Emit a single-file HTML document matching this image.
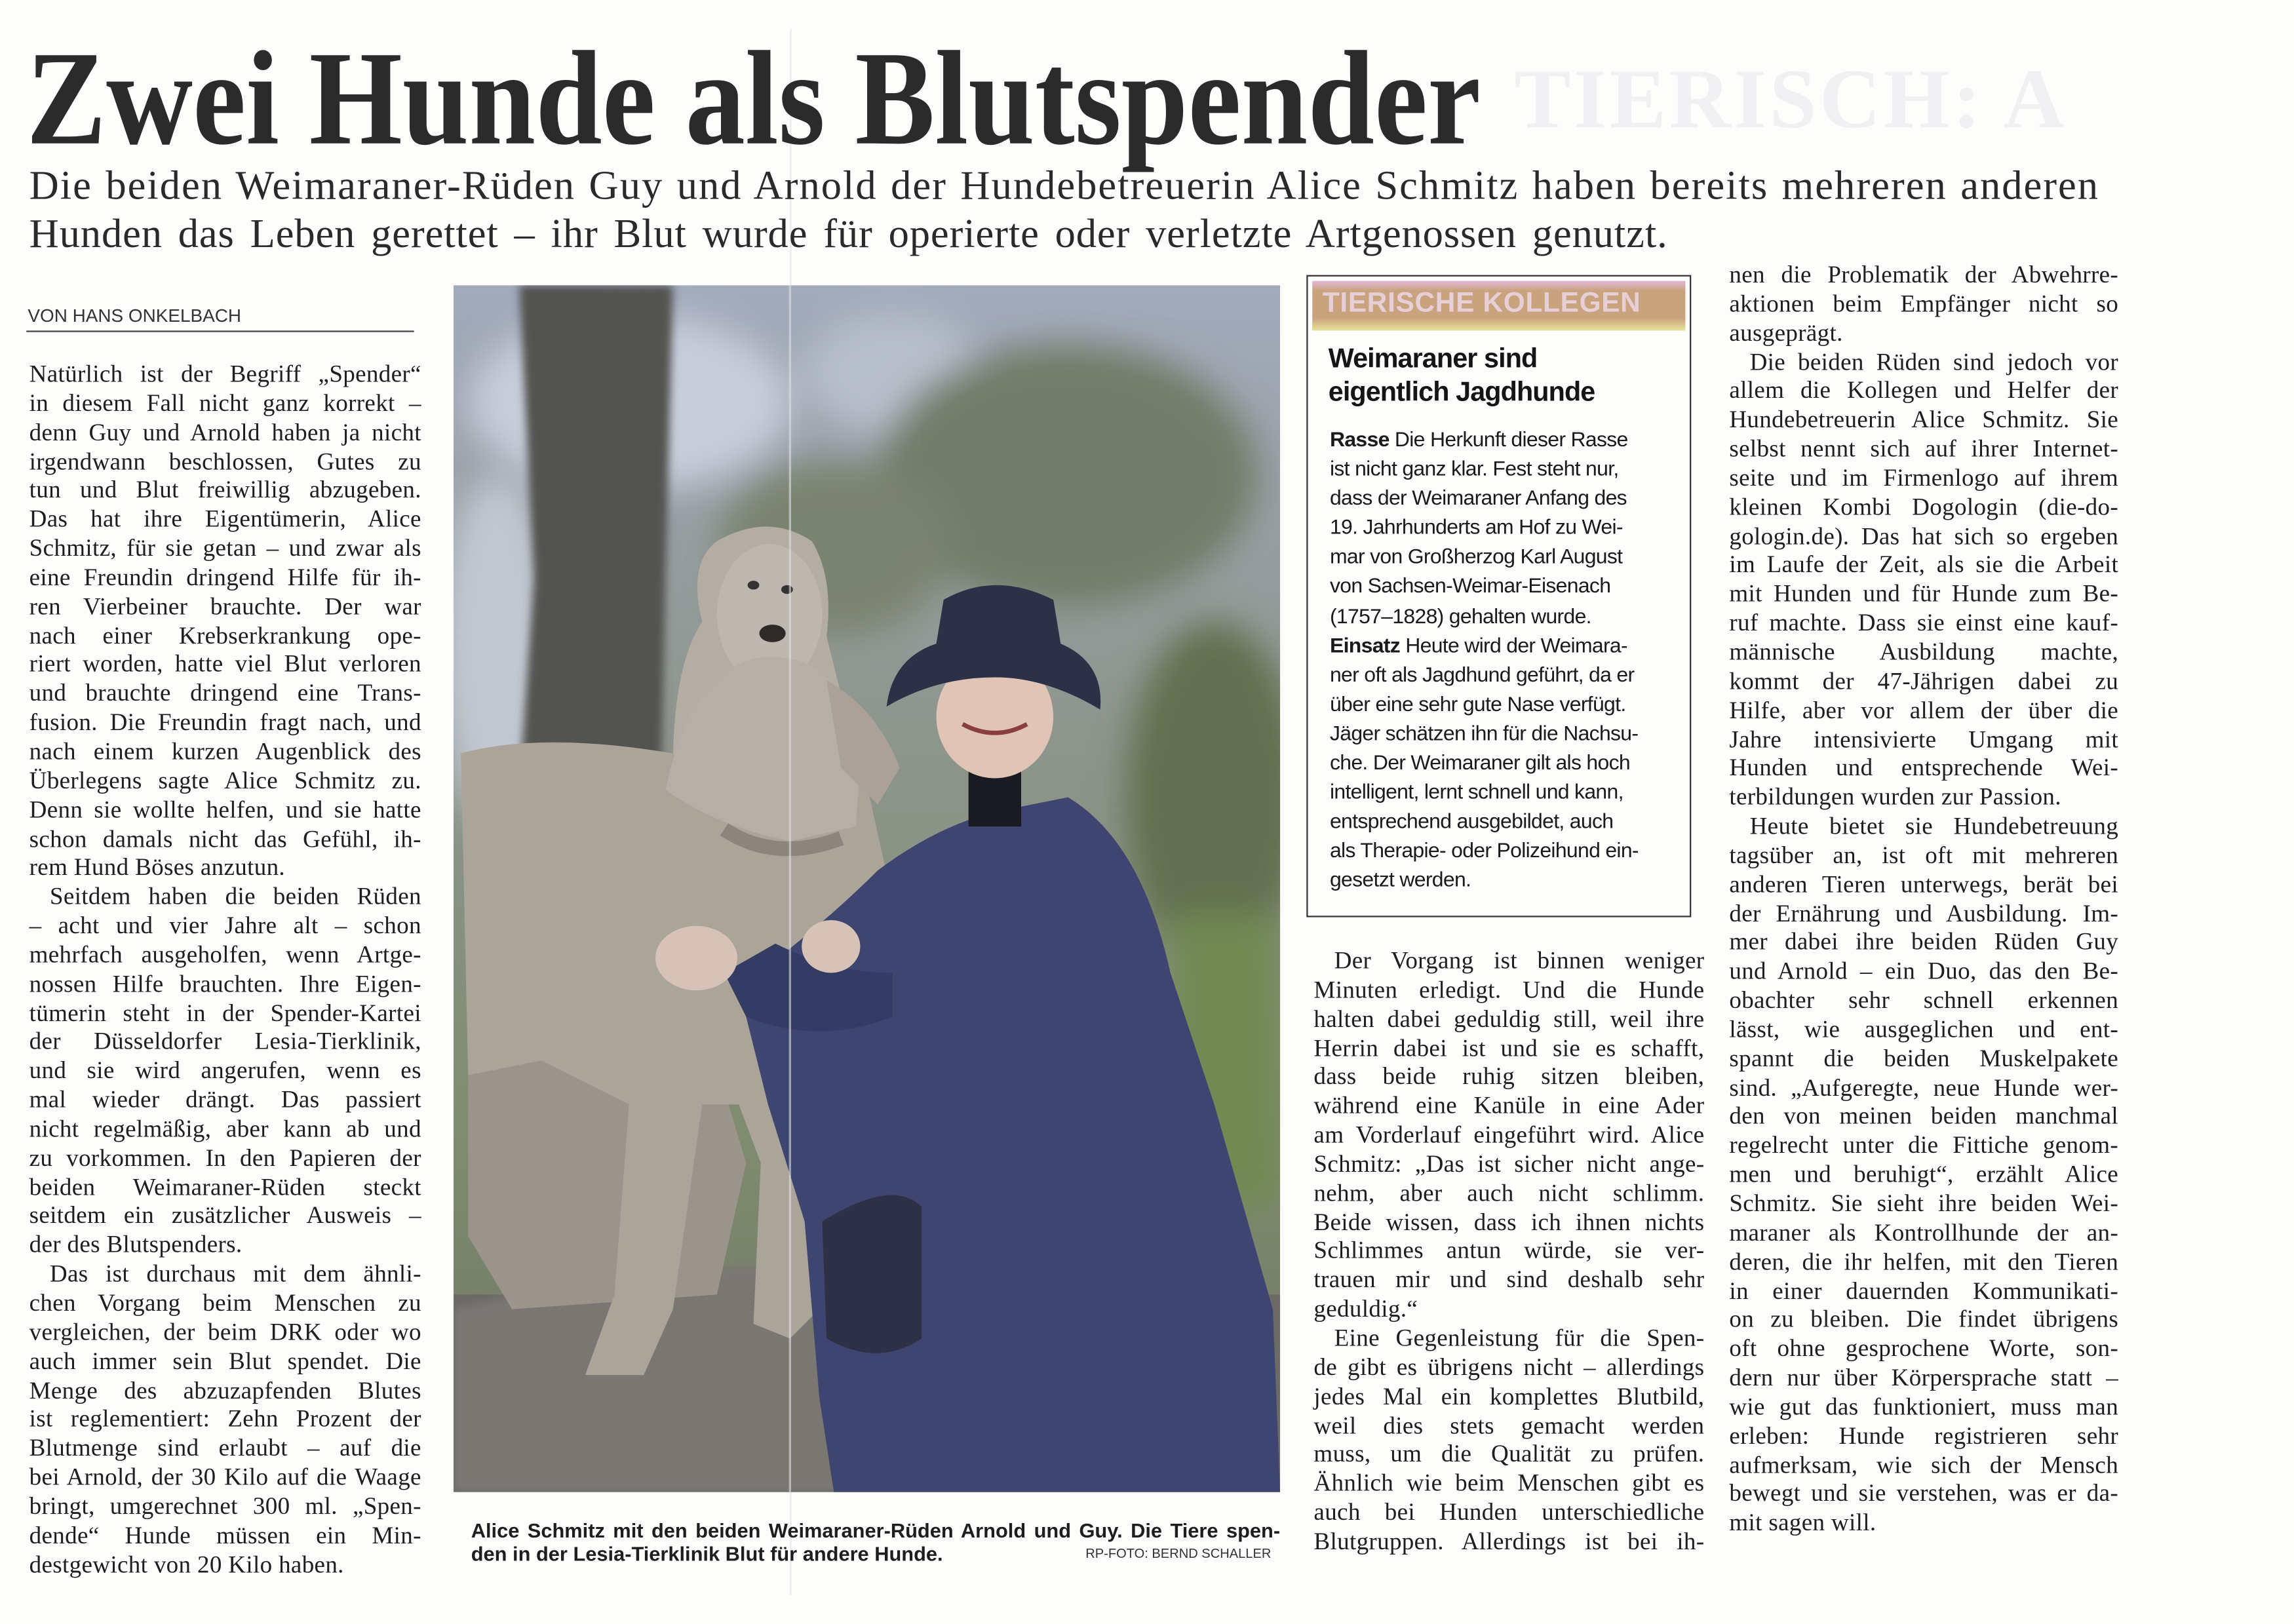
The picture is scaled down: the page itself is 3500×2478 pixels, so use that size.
<!DOCTYPE html>
<html><head><meta charset="utf-8">
<style>
html,body{margin:0;padding:0;background:#fdfdfc;}
body{width:3500px;height:2477px;overflow:hidden;position:relative;}
#s{position:absolute;left:0;top:0;width:1568px;height:1110px;transform:scale(2.2321);transform-origin:0 0;}
.a{position:absolute;}
.col{position:absolute;font-family:"Liberation Serif",serif;font-size:16.6px;color:#1e1e1e;letter-spacing:0.15px;}
.col div{height:19.85px;line-height:19.85px;white-space:nowrap;text-align:justify;text-align-last:justify;overflow:visible;}
.col div.l{text-align-last:left;}
.col div.i{padding-left:14px;}
.box{position:absolute;left:893px;top:188px;width:263px;height:439px;border:1.2px solid #333;box-sizing:border-box;}
.bx div{height:20.1px;line-height:20.1px;white-space:nowrap;}
</style></head><body><div id="s">

<div class="a" style="left:1035px;top:34px;font-family:'Liberation Serif',serif;font-weight:bold;font-size:58px;color:#f1f0f3;letter-spacing:2px;">TIERISCH: A</div>
<div class="a" style="left:540px;top:20px;width:1px;height:1070px;background:#ecebea;"></div>

<div class="a" style="left:18px;top:12px;font-family:'Liberation Serif',serif;font-weight:bold;font-size:92px;line-height:110px;color:#2b2b2b;white-space:nowrap;transform:scaleX(0.89);transform-origin:0 0;">Zwei Hunde als Blutspender</div>

<div class="a" style="left:20px;top:113px;width:1415px;font-family:'Liberation Serif',serif;font-size:28px;letter-spacing:0.9px;line-height:30px;color:#2a2a2a;text-align:justify;text-align-last:justify;white-space:nowrap;">Die beiden Weimaraner-Rüden Guy und Arnold der Hundebetreuerin Alice Schmitz haben bereits mehreren anderen</div>
<div class="a" style="left:20px;top:146px;width:1120px;font-family:'Liberation Serif',serif;font-size:28px;letter-spacing:0.4px;line-height:30px;color:#2a2a2a;text-align:justify;text-align-last:justify;white-space:nowrap;">Hunden das Leben gerettet – ihr Blut wurde für operierte oder verletzte Artgenossen genutzt.</div>

<div class="a" style="left:19px;top:209px;font-family:'Liberation Sans',sans-serif;font-size:12.5px;color:#333;">VON HANS ONKELBACH</div>
<div class="a" style="left:18px;top:226px;width:265px;height:1px;background:#444;"></div>

<div class="col" style="left:20px;top:246px;width:268px;">
<div>Natürlich ist der Begriff „Spender“</div>
<div>in diesem Fall nicht ganz korrekt –</div>
<div>denn Guy und Arnold haben ja nicht</div>
<div>irgendwann beschlossen, Gutes zu</div>
<div>tun und Blut freiwillig abzugeben.</div>
<div>Das hat ihre Eigentümerin, Alice</div>
<div>Schmitz, für sie getan – und zwar als</div>
<div>eine Freundin dringend Hilfe für ih-</div>
<div>ren Vierbeiner brauchte. Der war</div>
<div>nach einer Krebserkrankung ope-</div>
<div>riert worden, hatte viel Blut verloren</div>
<div>und brauchte dringend eine Trans-</div>
<div>fusion. Die Freundin fragt nach, und</div>
<div>nach einem kurzen Augenblick des</div>
<div>Überlegens sagte Alice Schmitz zu.</div>
<div>Denn sie wollte helfen, und sie hatte</div>
<div>schon damals nicht das Gefühl, ih-</div>
<div class="l">rem Hund Böses anzutun.</div>
<div class="i">Seitdem haben die beiden Rüden</div>
<div>– acht und vier Jahre alt – schon</div>
<div>mehrfach ausgeholfen, wenn Artge-</div>
<div>nossen Hilfe brauchten. Ihre Eigen-</div>
<div>tümerin steht in der Spender-Kartei</div>
<div>der Düsseldorfer Lesia-Tierklinik,</div>
<div>und sie wird angerufen, wenn es</div>
<div>mal wieder drängt. Das passiert</div>
<div>nicht regelmäßig, aber kann ab und</div>
<div>zu vorkommen. In den Papieren der</div>
<div>beiden Weimaraner-Rüden steckt</div>
<div>seitdem ein zusätzlicher Ausweis –</div>
<div class="l">der des Blutspenders.</div>
<div class="i">Das ist durchaus mit dem ähnli-</div>
<div>chen Vorgang beim Menschen zu</div>
<div>vergleichen, der beim DRK oder wo</div>
<div>auch immer sein Blut spendet. Die</div>
<div>Menge des abzuzapfenden Blutes</div>
<div>ist reglementiert: Zehn Prozent der</div>
<div>Blutmenge sind erlaubt – auf die</div>
<div>bei Arnold, der 30 Kilo auf die Waage</div>
<div>bringt, umgerechnet 300 ml. „Spen-</div>
<div>dende“ Hunde müssen ein Min-</div>
<div class="l">destgewicht von 20 Kilo haben.</div>
</div>

<svg class="a" style="left:310px;top:195px;" width="565" height="825" viewBox="0 0 565 825">
<defs>
<linearGradient id="bg" x1="0" y1="0" x2="0" y2="1">
<stop offset="0" stop-color="#a3abbd"/><stop offset=".35" stop-color="#8f968f"/><stop offset=".7" stop-color="#7f8c70"/><stop offset="1" stop-color="#6f7564"/></linearGradient>
<filter id="bl"><feGaussianBlur stdDeviation="12"/></filter>
<filter id="b2"><feGaussianBlur stdDeviation="3"/></filter>
</defs>
<rect width="565" height="825" fill="url(#bg)"/>
<g filter="url(#bl)">
<ellipse cx="120" cy="80" rx="110" ry="60" fill="#c8cddb"/>
<ellipse cx="300" cy="60" rx="60" ry="40" fill="#b8bfcc"/>
<ellipse cx="420" cy="130" rx="130" ry="90" fill="#727d69"/>
<ellipse cx="260" cy="180" rx="80" ry="60" fill="#7a836f"/>
<ellipse cx="520" cy="350" rx="60" ry="120" fill="#62704f"/>
<rect x="490" y="430" width="75" height="200" fill="#718a52"/>
<ellipse cx="30" cy="250" rx="40" ry="120" fill="#c2c7d1"/>
</g>
<path d="M45 0 L150 0 L145 200 L140 420 L40 420 L55 200 Z" fill="#535350" filter="url(#b2)"/>
<rect x="0" y="690" width="565" height="135" fill="#6c6a66"/>
<path d="M0 700 Q250 640 420 700 L420 825 L0 825 Z" fill="#7a7773" filter="url(#b2)"/>
<path d="M10 460 Q40 420 120 430 L170 500 L200 600 L180 690 L40 700 L10 650 Z" fill="#9a948b"/>
<path d="M150 330 Q150 260 170 230 Q160 190 180 175 Q215 155 245 175 Q260 200 255 240 L270 300 L230 420 L160 420 Z" fill="#b4ada4"/>
<ellipse cx="216" cy="225" rx="36" ry="48" fill="#bdb7b0"/>
<ellipse cx="205" cy="205" rx="4" ry="3" fill="#333"/><ellipse cx="228" cy="208" rx="4" ry="3" fill="#333"/>
<ellipse cx="218" cy="238" rx="9" ry="6" fill="#2d2a28"/>
<path d="M5 320 Q60 305 150 320 L230 330 L280 330 L300 420 L275 470 L265 560 L250 700 L230 720 L205 710 L210 600 L195 560 L170 560 L150 700 L130 745 L90 745 L110 690 L120 560 L60 530 L10 540 Z" fill="#aba499"/>
<path d="M145 345 Q160 270 205 255 Q245 250 260 275 L280 300 L275 370 L230 380 Q180 370 145 345 Z" fill="#b6afa6"/>
<path d="M255 270 Q290 290 305 330 L290 355 L265 330 Z" fill="#aaa298"/>
<path d="M185 372 Q220 395 265 378" stroke="#8c857c" stroke-width="10" fill="none"/>
<path d="M195 480 Q250 440 290 400 Q330 370 370 360 L420 350 Q470 380 490 470 L520 560 L560 700 L565 825 L260 825 L250 760 L240 640 L215 560 Z" fill="#3d4570"/>
<path d="M300 470 Q260 470 220 450 L185 470 L200 500 Q250 520 300 500 Z" fill="#353c63"/>
<ellipse cx="166" cy="460" rx="28" ry="22" fill="#d6c2b7"/>
<ellipse cx="258" cy="452" rx="20" ry="18" fill="#d6c2b7"/>
<path d="M252 640 Q300 610 320 630 L320 720 Q290 740 255 720 Z" fill="#2d3146"/>
<rect x="352" y="330" width="36" height="40" fill="#1a1a22"/>
<ellipse cx="370" cy="295" rx="40" ry="42" fill="#e0c4b6"/>
<path d="M296 288 Q300 255 330 245 L335 215 Q370 195 410 215 L415 245 Q445 258 442 290 Q405 268 370 268 Q330 268 296 288 Z" fill="#2c3148"/>
<path d="M348 300 Q370 312 392 300" stroke="#8a3d3d" stroke-width="3" fill="none"/>
<line x1="230" y1="0" x2="230" y2="825" stroke="#e0dfe6" stroke-width="1.5" opacity=".6"/>
</svg>

<div class="a" style="left:322px;top:1037px;width:553px;font-family:'Liberation Sans',sans-serif;font-weight:bold;font-size:13.8px;line-height:19px;color:#1e1e1e;white-space:nowrap;text-align:justify;text-align-last:justify;">Alice Schmitz mit den beiden Weimaraner-Rüden Arnold und Guy. Die Tiere spen-</div>
<div class="a" style="left:322px;top:1053px;font-family:'Liberation Sans',sans-serif;font-weight:bold;font-size:13.8px;line-height:19px;color:#1e1e1e;white-space:nowrap;">den in der Lesia-Tierklinik Blut für andere Hunde.</div>
<div class="a" style="left:742px;top:1053px;font-family:'Liberation Sans',sans-serif;font-size:9px;line-height:19px;color:#333;white-space:nowrap;">RP-FOTO: BERND SCHALLER</div>

<div class="box"></div>
<div class="a" style="left:897px;top:192px;width:255px;height:34px;background:linear-gradient(180deg,#e3b8d6 0%,#c9a37d 20%,#c9a37d 75%,#e8e39a 100%);"></div>
<div class="a" style="left:904px;top:193px;font-family:'Liberation Sans',sans-serif;font-weight:bold;font-size:19px;line-height:30px;color:#e7cfd8;letter-spacing:.3px;">TIERISCHE KOLLEGEN</div>
<div class="a" style="left:908px;top:233px;font-family:'Liberation Sans',sans-serif;font-weight:bold;font-size:18.5px;line-height:23px;color:#151515;letter-spacing:-.4px;">Weimaraner sind<br>eigentlich Jagdhunde</div>
<div class="a bx" style="left:909px;top:291px;font-family:'Liberation Sans',sans-serif;font-size:14.3px;color:#1a1a1a;letter-spacing:-.3px;">
<div><b>Rasse</b> Die Herkunft dieser Rasse</div>
<div>ist nicht ganz klar. Fest steht nur,</div>
<div>dass der Weimaraner Anfang des</div>
<div>19. Jahrhunderts am Hof zu Wei-</div>
<div>mar von Großherzog Karl August</div>
<div>von Sachsen-Weimar-Eisenach</div>
<div>(1757–1828) gehalten wurde.</div>
<div><b>Einsatz</b> Heute wird der Weimara-</div>
<div>ner oft als Jagdhund geführt, da er</div>
<div>über eine sehr gute Nase verfügt.</div>
<div>Jäger schätzen ihn für die Nachsu-</div>
<div>che. Der Weimaraner gilt als hoch</div>
<div>intelligent, lernt schnell und kann,</div>
<div>entsprechend ausgebildet, auch</div>
<div>als Therapie- oder Polizeihund ein-</div>
<div>gesetzt werden.</div>
</div>

<div class="col" style="left:898px;top:647px;width:267px;">
<div class="i">Der Vorgang ist binnen weniger</div>
<div>Minuten erledigt. Und die Hunde</div>
<div>halten dabei geduldig still, weil ihre</div>
<div>Herrin dabei ist und sie es schafft,</div>
<div>dass beide ruhig sitzen bleiben,</div>
<div>während eine Kanüle in eine Ader</div>
<div>am Vorderlauf eingeführt wird. Alice</div>
<div>Schmitz: „Das ist sicher nicht ange-</div>
<div>nehm, aber auch nicht schlimm.</div>
<div>Beide wissen, dass ich ihnen nichts</div>
<div>Schlimmes antun würde, sie ver-</div>
<div>trauen mir und sind deshalb sehr</div>
<div class="l">geduldig.“</div>
<div class="i">Eine Gegenleistung für die Spen-</div>
<div>de gibt es übrigens nicht – allerdings</div>
<div>jedes Mal ein komplettes Blutbild,</div>
<div>weil dies stets gemacht werden</div>
<div>muss, um die Qualität zu prüfen.</div>
<div>Ähnlich wie beim Menschen gibt es</div>
<div>auch bei Hunden unterschiedliche</div>
<div>Blutgruppen. Allerdings ist bei ih-</div>
</div>

<div class="col" style="left:1182px;top:178px;width:266px;">
<div>nen die Problematik der Abwehrre-</div>
<div>aktionen beim Empfänger nicht so</div>
<div class="l">ausgeprägt.</div>
<div class="i">Die beiden Rüden sind jedoch vor</div>
<div>allem die Kollegen und Helfer der</div>
<div>Hundebetreuerin Alice Schmitz. Sie</div>
<div>selbst nennt sich auf ihrer Internet-</div>
<div>seite und im Firmenlogo auf ihrem</div>
<div>kleinen Kombi Dogologin (die-do-</div>
<div>gologin.de). Das hat sich so ergeben</div>
<div>im Laufe der Zeit, als sie die Arbeit</div>
<div>mit Hunden und für Hunde zum Be-</div>
<div>ruf machte. Dass sie einst eine kauf-</div>
<div>männische Ausbildung machte,</div>
<div>kommt der 47-Jährigen dabei zu</div>
<div>Hilfe, aber vor allem der über die</div>
<div>Jahre intensivierte Umgang mit</div>
<div>Hunden und entsprechende Wei-</div>
<div class="l">terbildungen wurden zur Passion.</div>
<div class="i">Heute bietet sie Hundebetreuung</div>
<div>tagsüber an, ist oft mit mehreren</div>
<div>anderen Tieren unterwegs, berät bei</div>
<div>der Ernährung und Ausbildung. Im-</div>
<div>mer dabei ihre beiden Rüden Guy</div>
<div>und Arnold – ein Duo, das den Be-</div>
<div>obachter sehr schnell erkennen</div>
<div>lässt, wie ausgeglichen und ent-</div>
<div>spannt die beiden Muskelpakete</div>
<div>sind. „Aufgeregte, neue Hunde wer-</div>
<div>den von meinen beiden manchmal</div>
<div>regelrecht unter die Fittiche genom-</div>
<div>men und beruhigt“, erzählt Alice</div>
<div>Schmitz. Sie sieht ihre beiden Wei-</div>
<div>maraner als Kontrollhunde der an-</div>
<div>deren, die ihr helfen, mit den Tieren</div>
<div>in einer dauernden Kommunikati-</div>
<div>on zu bleiben. Die findet übrigens</div>
<div>oft ohne gesprochene Worte, son-</div>
<div>dern nur über Körpersprache statt –</div>
<div>wie gut das funktioniert, muss man</div>
<div>erleben: Hunde registrieren sehr</div>
<div>aufmerksam, wie sich der Mensch</div>
<div>bewegt und sie verstehen, was er da-</div>
<div class="l">mit sagen will.</div>
</div>

</div></body></html>
